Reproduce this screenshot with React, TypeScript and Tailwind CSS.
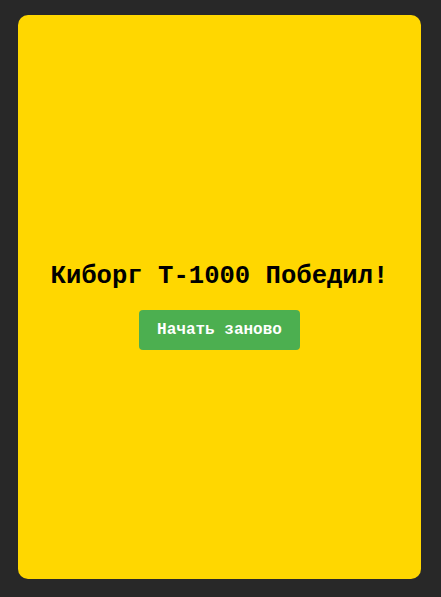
export default function App() {
  return (
    <div className="h-[597px] w-[441px] bg-[#282828] pl-[18px] pr-[20px] pt-[15px] pb-[18px]">
      <div
        className="flex h-full w-full flex-col items-center justify-center rounded-[10px] bg-[#ffd700] pt-[18px]"
        style={{ fontFamily: '"Liberation Mono", "Courier New", monospace' }}
      >
        <h2 className="text-[25.6px] font-bold leading-[30px] text-black">Киборг Т-1000 Победил!</h2>
        <button className="mt-[18px] h-[40px] w-[161px] rounded-[4px] bg-[#4caf50] text-[16px] font-bold text-white">
          Начать заново
        </button>
      </div>
    </div>
  )
}
